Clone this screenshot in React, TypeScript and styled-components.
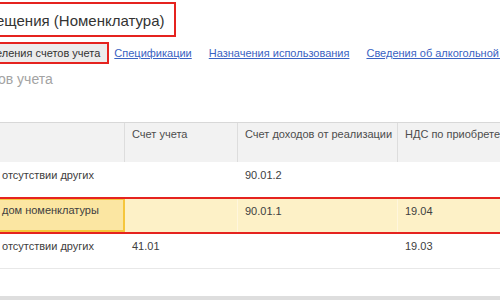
import React, { FC } from 'react';
import styled, { createGlobalStyle } from 'styled-components';

const GlobalStyle = createGlobalStyle`
  body {
    margin: 0;
    background: #ffffff;
    font-family: 'Liberation Sans', Arial, sans-serif;
    color: #333333;
  }
`;

const Page = styled.div`
  width: 500px;
  height: 300px;
  overflow: hidden;
  padding-top: 2px;
  box-sizing: border-box;
`;

const TitleBox = styled.div`
  display: inline-block;
  margin-left: -6px;
  border: 2px solid #e5231f;
  padding: 7px 10px 4px 0;
  font-size: 15px;
  line-height: 20px;
  color: #333333;
  white-space: nowrap;
`;

const TabsRow = styled.div`
  display: flex;
  align-items: center;
  gap: 17px;
  margin-top: 5px;
  white-space: nowrap;
  font-size: 11px;
`;

const ActiveTab = styled.div`
  margin-left: -6px;
  margin-right: -12px;
  border: 2px solid #e5231f;
  background: #ececec;
  padding: 1px 7px 1px 0;
  line-height: 16px;
  color: #333333;
`;

const TabLink = styled.a`
  color: #3a62c2;
  text-decoration: underline;
  line-height: 16px;
  cursor: pointer;
`;

const SubHeading = styled.div`
  margin-top: 6px;
  margin-left: -2px;
  font-size: 14px;
  line-height: 18px;
  color: #a3a3a3;
`;

const Table = styled.div`
  margin-top: 34px;
  margin-left: -10px;
  width: 620px;
  font-size: 11px;
`;

const Grid = styled.div<{ $height: number; $bg?: string; $marked?: boolean }>`
  display: grid;
  grid-template-columns: 135px 113px 160px 212px;
  height: ${(p) => p.$height}px;
  box-sizing: border-box;
  background: ${(p) => p.$bg ?? 'transparent'};
  ${(p) => (p.$marked ? 'outline: 2px solid #e5231f; outline-offset: -1px; position: relative;' : '')}
`;

const HeaderRow = styled(Grid)`
  border-top: 1px solid #d8d8d8;
  background: #f2f2f2;
`;

const HeadCell = styled.div`
  border-right: 1px solid #dddddd;
  padding: 4px 7px 0;
  line-height: 15px;
  color: #4d4d4d;
  white-space: nowrap;
`;

const BodyRow = styled(Grid)`
  border-bottom: 1px solid #e8e8e8;
`;

const Cell = styled.div<{ $current?: boolean; $divider?: string }>`
  padding: 5px 7px 0;
  line-height: 16px;
  color: #404040;
  white-space: nowrap;
  box-sizing: border-box;
  border-right: 1px solid ${(p) => p.$divider ?? 'transparent'};
  ${(p) =>
    p.$current
      ? 'background: #fbe6a2; border: 2px solid #f5c63c; padding: 2px 7px 0 10px;'
      : 'padding-left: 12px;'}
  &:not(:first-child) {
    padding-left: 7px;
  }
`;

const BottomBar = styled.div`
  height: 6px;
  background: #dedede;
`;

interface RowData {
  name: string;
  account: string;
  income: string;
  vat: string;
}

const rows: RowData[] = [
  { name: 'отсутствии других', account: '', income: '90.01.2', vat: '' },
  { name: 'дом номенклатуры', account: '', income: '90.01.1', vat: '19.04' },
  { name: 'отсутствии других', account: '41.01', income: '', vat: '19.03' },
];

const App: FC = () => (
  <>
    <GlobalStyle />
    <Page>
      <TitleBox>ещения (Номенклатура)</TitleBox>
      <TabsRow>
        <ActiveTab>еления счетов учета</ActiveTab>
        <TabLink>Спецификации</TabLink>
        <TabLink>Назначения использования</TabLink>
        <TabLink>Сведения об алкогольной продукции</TabLink>
      </TabsRow>
      <SubHeading>ов учета</SubHeading>
      <Table>
        <HeaderRow $height={40}>
          <HeadCell />
          <HeadCell>Счет учета</HeadCell>
          <HeadCell>Счет доходов от реализации</HeadCell>
          <HeadCell>НДС по приобретенным ценностям</HeadCell>
        </HeaderRow>
        {rows.map((r, i) => {
          const marked = i === 1;
          const divider = marked ? '#fff6dc' : undefined;
          return (
            <BodyRow
              key={i}
              $height={i === 1 ? 35 : 36}
              $bg={marked ? '#fdf1c7' : undefined}
              $marked={marked}
            >
              <Cell $current={marked}>{r.name}</Cell>
              <Cell $divider={divider}>{r.account}</Cell>
              <Cell $divider={divider}>{r.income}</Cell>
              <Cell>{r.vat}</Cell>
            </BodyRow>
          );
        })}
        <Grid $height={27} />
        <BottomBar />
      </Table>
    </Page>
  </>
);

export default App;
